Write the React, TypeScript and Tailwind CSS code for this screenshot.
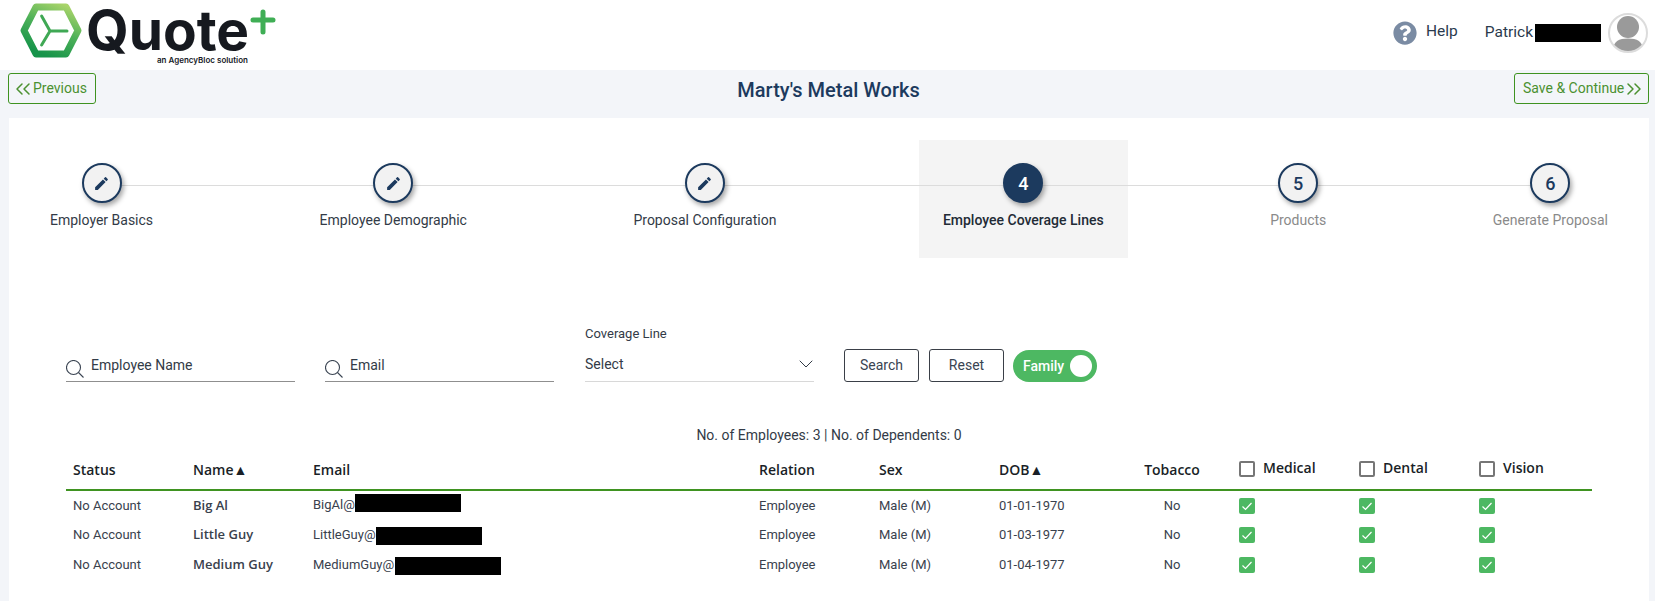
import { ChevronDown, ChevronsLeft, ChevronsRight } from "lucide-react";
import { MdEdit } from "react-icons/md";
import { FaQuestionCircle } from "react-icons/fa";

function Step({ n, label, state }: { n?: string; label: string; state: "done" | "active" | "todo" }) {
  return (
    <div className={`flex h-[118px] flex-col items-center px-6 pt-[23px] ${state === "active" ? "bg-[#f4f4f4]" : ""}`}>
      <div
        className={`relative z-10 flex h-10 w-10 items-center justify-center rounded-full border-[2px] border-[#1c3a5e] shadow-[2px_3px_5px_rgba(0,0,0,0.35)] ${
          state === "active" ? "bg-[#1c3a5e] text-white" : "bg-[#f2f2f2] text-[#1c3a5e]"
        }`}
      >
        {n ? <span className="text-[18px] font-medium">{n}</span> : <MdEdit className="text-[17px]" />}
      </div>
      <div
        className={`relative mt-[7px] whitespace-nowrap text-[14px] leading-[20px] ${
          state === "todo" ? "text-[#8a8a8a]" : state === "active" ? "font-medium text-[#222b36]" : "text-[#333b47]"
        }`}
      >
        {label}
      </div>
    </div>
  );
}

function SearchGlyph() {
  return (
    <svg width="18" height="18" viewBox="0 0 18 18" fill="none" stroke="#3a4452" strokeWidth="1.1" className="mr-[7px] mt-[11px] shrink-0">
      <circle cx="7.5" cy="7.5" r="7" />
      <path d="M12.5 12.5L17.5 17.5" />
    </svg>
  );
}

function SearchField({ label }: { label: string }) {
  return (
    <div className="flex h-[33px] w-[229px] items-start border-b border-[#8f8f8f] text-[14px] leading-[20px] text-[#333b47]">
      <SearchGlyph />
      <span className="mt-[6px]">{label}</span>
    </div>
  );
}

function Check() {
  return (
    <div className="flex h-4 w-4 items-center justify-center rounded-[2px] bg-[#4db862]">
      <svg width="12" height="12" viewBox="0 0 12 12" fill="none" stroke="white" strokeWidth="1.2">
        <path d="M1.5 6.5L4.5 9.5L10.5 3" />
      </svg>
    </div>
  );
}

const rows = [
  { name: "Big Al", mail: "BigAl@", dob: "01-01-1970", bar: "mb-[6px] w-[106px]" },
  { name: "Little Guy", mail: "LittleGuy@", dob: "01-03-1977", bar: "mb-0 w-[106px]" },
  { name: "Medium Guy", mail: "MediumGuy@", dob: "01-04-1977", bar: "mb-0 ml-px w-[106px]" },
];

const thBase = "px-[7px] pb-[6px] text-[14px] font-semibold text-[#1a1f27] font-['Open_Sans',sans-serif]";
const th = `${thBase} text-left`;

export default function App() {
  return (
    <div className="h-[601px] w-[1655px] overflow-hidden bg-[#f3f5f9] font-['Roboto',sans-serif]">
      <header className="flex h-[70px] items-start justify-between bg-white">
        <div className="ml-[20px] flex h-[70px] items-start">
          <svg width="62" height="55" viewBox="0 0 62 55" className="mt-[3px] shrink-0" fill="none">
            <defs>
              <linearGradient id="hx" x1="0.85" y1="0" x2="0.35" y2="1">
                <stop offset="0" stopColor="#a9d46a" />
                <stop offset="0.5" stopColor="#4cb058" />
                <stop offset="1" stopColor="#17944a" />
              </linearGradient>
            </defs>
            <path d="M16 4H46L58 27.5L46 51H16L4 27.5Z" stroke="url(#hx)" strokeWidth="7" strokeLinejoin="round" />
            <path d="M21.6 13L30 28M30 28L21.6 42M30 28H47" stroke="#3fa854" strokeWidth="3" strokeLinecap="round" />
          </svg>
          <div className="relative ml-[6px] h-[70px] w-[200px]">
            <span className="absolute left-[-2px] top-[8px] font-['Inter',sans-serif] text-[55px] font-bold leading-[44px] text-[#16191f]">
              Quote
            </span>
            <svg width="26" height="26" viewBox="0 0 26 26" className="absolute left-[162px] top-[9px]" fill="none" stroke="#3fae55" strokeWidth="5" strokeLinecap="round">
              <path d="M13 3V23M3 11H23" />
            </svg>
            <span className="absolute left-[69px] top-[54px] whitespace-nowrap font-['Inter',sans-serif] text-[8px] font-semibold leading-[12px] text-[#16191f]">
              an AgencyBloc solution
            </span>
          </div>
        </div>
        <div className="mr-[7px] mt-[13px] flex items-center">
          <FaQuestionCircle className="text-[24px] text-[#7a8ba3]" />
          <span className="mb-[2px] ml-[9px] text-[15.5px] text-[#2b3a4d]">Help</span>
          <span className="ml-[27px] text-[15.5px] text-[#2b3a4d]">Patrick</span>
          <span className="ml-[2px] h-[18px] w-[66px] bg-black" />
          <div className="ml-[7px] h-10 w-10 overflow-hidden rounded-full border-[2px] border-[#dcdcdc] bg-white">
            <svg viewBox="0 0 36 36" className="h-full w-full" fill="#9a9a9a">
              <circle cx="18" cy="12" r="11" />
              <path d="M3 36C3 26 9 23.5 18 23.5S33 26 33 36Z" />
            </svg>
          </div>
        </div>
      </header>

      <div className="grid h-[48px] grid-cols-[1fr_auto_1fr] items-start pl-[8px] pr-[6px] pt-[3px]">
        <button className="flex h-[31px] w-[88px] items-center justify-start rounded-[3px] border border-[#3f9321] bg-transparent pl-[2px] text-[14px] text-[#4b9130]">
          <ChevronsLeft size={24} strokeWidth={1.5} className="-mr-[2px]" />
          <span>Previous</span>
        </button>
        <h1 className="mt-[5px] text-[20px] font-medium leading-[24px] text-[#1c3a5e]">Marty's Metal Works</h1>
        <button className="flex h-[31px] w-[135px] items-center justify-start justify-self-end rounded-[3px] border border-[#3f9321] bg-transparent pl-[8px] text-[14px] text-[#4b9130]">
          <span>Save &amp; Continue</span>
          <ChevronsRight size={24} strokeWidth={1.5} className="-ml-[2px]" />
        </button>
      </div>

      <main className="ml-[9px] mr-[6px] h-[483px] bg-white pt-[22px]">
        <div className="relative mx-[17px] flex justify-between">
          <div className="absolute left-[75px] right-[82px] top-[45px] h-px bg-[#dcdcdc]" />
          <Step label="Employer Basics" state="done" />
          <Step label="Employee Demographic" state="done" />
          <Step label="Proposal Configuration" state="done" />
          <Step n="4" label="Employee Coverage Lines" state="active" />
          <Step n="5" label="Products" state="todo" />
          <Step n="6" label="Generate Proposal" state="todo" />
        </div>

        <div className="ml-[57px] mt-[67px] flex items-end">
          <SearchField label="Employee Name" />
          <div className="ml-[30px]">
            <SearchField label="Email" />
          </div>
          <div className="ml-[31px] w-[229px] border-b border-[#d8d8d8] text-[#333b47]">
            <div className="text-[13px] leading-[18px]">Coverage Line</div>
            <div className="mt-[11px] flex h-[27px] items-start justify-between text-[14px] leading-[20px]">
              <span>Select</span>
              <ChevronDown size={24} strokeWidth={1} className="-mr-[4px] -mt-[2px]" />
            </div>
          </div>
          <button className="ml-[30px] h-[33px] w-[75px] rounded-[3px] border border-[#3a3f47] text-[14px] text-[#3a4452]">Search</button>
          <button className="ml-[10px] h-[33px] w-[75px] rounded-[3px] border border-[#3a3f47] text-[14px] text-[#3a4452]">Reset</button>
          <div className="ml-[9px] flex h-[32px] w-[84px] items-center justify-between rounded-full bg-[#4db862] pl-[10px] pr-[5px] text-[14px] font-medium text-white">
            <span>Family</span>
            <span className="h-[22px] w-[22px] rounded-full bg-white" />
          </div>
        </div>

        <div className="mt-[43px] text-center text-[14px] leading-[20px] text-[#333b47]">
          No. of Employees: 3 | No. of Dependents: 0
        </div>

        <table className="ml-[57px] mt-[10px] w-[1526px] table-fixed border-collapse">
          <colgroup>
            <col className="w-[120px]" />
            <col className="w-[120px]" />
            <col className="w-[446px]" />
            <col className="w-[120px]" />
            <col className="w-[120px]" />
            <col className="w-[120px]" />
            <col className="w-[120px]" />
            <col className="w-[120px]" />
            <col className="w-[120px]" />
            <col className="w-[120px]" />
          </colgroup>
          <thead>
            <tr className="h-[35px] border-b-2 border-[#3f9321]">
              <th className={th}>Status</th>
              <th className={th}>Name▲</th>
              <th className={th}>Email</th>
              <th className={th}>Relation</th>
              <th className={th}>Sex</th>
              <th className={th}>DOB▲</th>
              <th className={`${thBase} text-center`}>Tobacco</th>
              {["Medical", "Dental", "Vision"].map((c) => (
                <th key={c} className={th}>
                  <div className="flex items-center">
                    <span className="h-4 w-4 rounded-[2px] border-[2px] border-[#767676] bg-white" />
                    <span className="mb-[3px] ml-2 leading-[16px]">{c}</span>
                  </div>
                </th>
              ))}
            </tr>
          </thead>
          <tbody className="text-[13px] text-[#39414d]">
            {rows.map((r) => (
              <tr key={r.name} className="h-[30px]">
                <td className="px-[7px]">No Account</td>
                <td className="px-[7px] font-['Open_Sans',sans-serif] text-[13px] font-semibold">{r.name}</td>
                <td className="whitespace-nowrap px-[7px]">
                  {r.mail}
                  <span className={`inline-block h-[18px] bg-black align-middle ${r.bar}`} />
                </td>
                <td className="px-[7px]">Employee</td>
                <td className="px-[7px]">Male (M)</td>
                <td className="px-[7px]">{r.dob}</td>
                <td className="px-[7px] text-center">No</td>
                <td className="px-[7px]"><Check /></td>
                <td className="px-[7px]"><Check /></td>
                <td className="px-[7px]"><Check /></td>
              </tr>
            ))}
          </tbody>
        </table>
      </main>
    </div>
  );
}
